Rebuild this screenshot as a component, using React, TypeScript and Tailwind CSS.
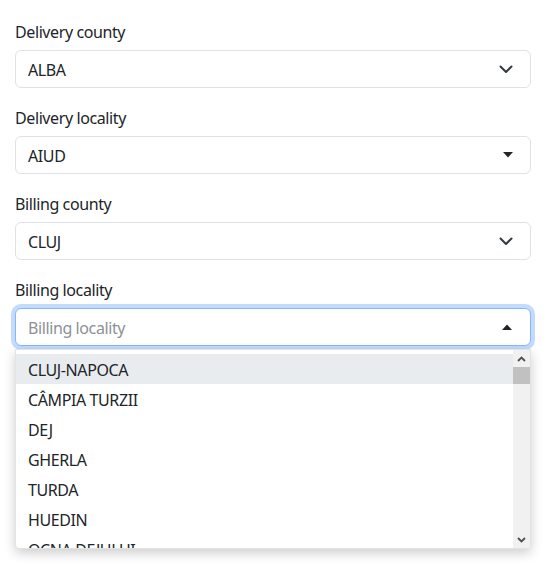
import React from "react";

const font = { fontFamily: '"Noto Sans", "Open Sans", sans-serif', letterSpacing: "-0.4px" };

function Chevron() {
  return (
    <svg width="16" height="16" viewBox="0 0 16 16" fill="none">
      <path d="M2.5 5.5 8 11l5.5-5.5" stroke="#343a40" strokeWidth="2" strokeLinecap="round" strokeLinejoin="round" />
    </svg>
  );
}

function Caret({ up }: { up?: boolean }) {
  return (
    <svg width="12" height="8" viewBox="0 0 12 8">
      {up ? <path d="M1 7h10L6 1.5z" fill="#212529" /> : <path d="M1 1h10L6 6.5z" fill="#212529" />}
    </svg>
  );
}

function Field({ label, value, icon }: { label: string; value: string; icon: React.ReactNode }) {
  return (
    <div className="flex flex-col">
      <div className="h-[24px] text-[16px] leading-[24px] text-[#212529] mb-[6px]">{label}</div>
      <div className="h-[38px] rounded-[6px] border border-[#dee2e6] bg-white flex items-center pl-[12px] pr-[16px] justify-between">
        <span className="text-[16px] text-[#212529] pt-[2px]">{value}</span>
        {icon}
      </div>
    </div>
  );
}

const options = ["CLUJ-NAPOCA", "CÂMPIA TURZII", "DEJ", "GHERLA", "TURDA", "HUEDIN", "OCNA DEJULUI"];

export default function App() {
  return (
    <div className="w-[548px] h-[569px] bg-white overflow-hidden" style={font}>
      <div className="pl-[15px] pr-[17px] pt-[20px] flex flex-col gap-[18px]">
        <Field label="Delivery county" value="ALBA" icon={<Chevron />} />
        <Field label="Delivery locality" value="AIUD" icon={<Caret />} />
        <Field label="Billing county" value="CLUJ" icon={<Chevron />} />
        <div className="flex flex-col">
          <div className="h-[24px] text-[16px] leading-[24px] text-[#212529] mb-[6px]">Billing locality</div>
          <div className="relative">
            <div className="h-[38px] rounded-[6px] border border-[#86b7fe] bg-white flex items-center pl-[12px] pr-[17px] justify-between shadow-[0_0_0_4px_rgba(13,110,253,0.25)]">
              <span className="text-[16px] text-[#8c9196] pt-[2px]">Billing locality</span>
              <Caret up />
            </div>
            <div className="absolute left-0 right-0 top-[41px] h-[200px] bg-white rounded-b-[4px] shadow-[0_4px_12px_rgba(0,0,0,0.2)] flex overflow-hidden border border-[#e3e3e3]">
              <div className="flex-1 pt-[4px] overflow-hidden">
                {options.map((o, i) => (
                  <div
                    key={o}
                    className={`h-[30px] flex items-center pl-[12px] pt-[2px] text-[16px] text-[#212529] ${i === 0 ? "bg-[#e9ecef]" : ""}`}
                  >
                    {o}
                  </div>
                ))}
              </div>
              <div className="w-[17px] bg-[#f1f1f1] flex flex-col">
                <div className="h-[17px] flex items-center justify-center">
                  <svg width="9" height="6" viewBox="0 0 9 6"><path d="M1 5 4.5 1.5 8 5" stroke="#505050" strokeWidth="1.8" fill="none" /></svg>
                </div>
                <div className="h-[17px] bg-[#c1c1c1]" />
                <div className="flex-1" />
                <div className="h-[17px] flex items-center justify-center">
                  <svg width="9" height="6" viewBox="0 0 9 6"><path d="M1 1 4.5 4.5 8 1" stroke="#505050" strokeWidth="1.8" fill="none" /></svg>
                </div>
              </div>
            </div>
          </div>
        </div>
      </div>
    </div>
  );
}
